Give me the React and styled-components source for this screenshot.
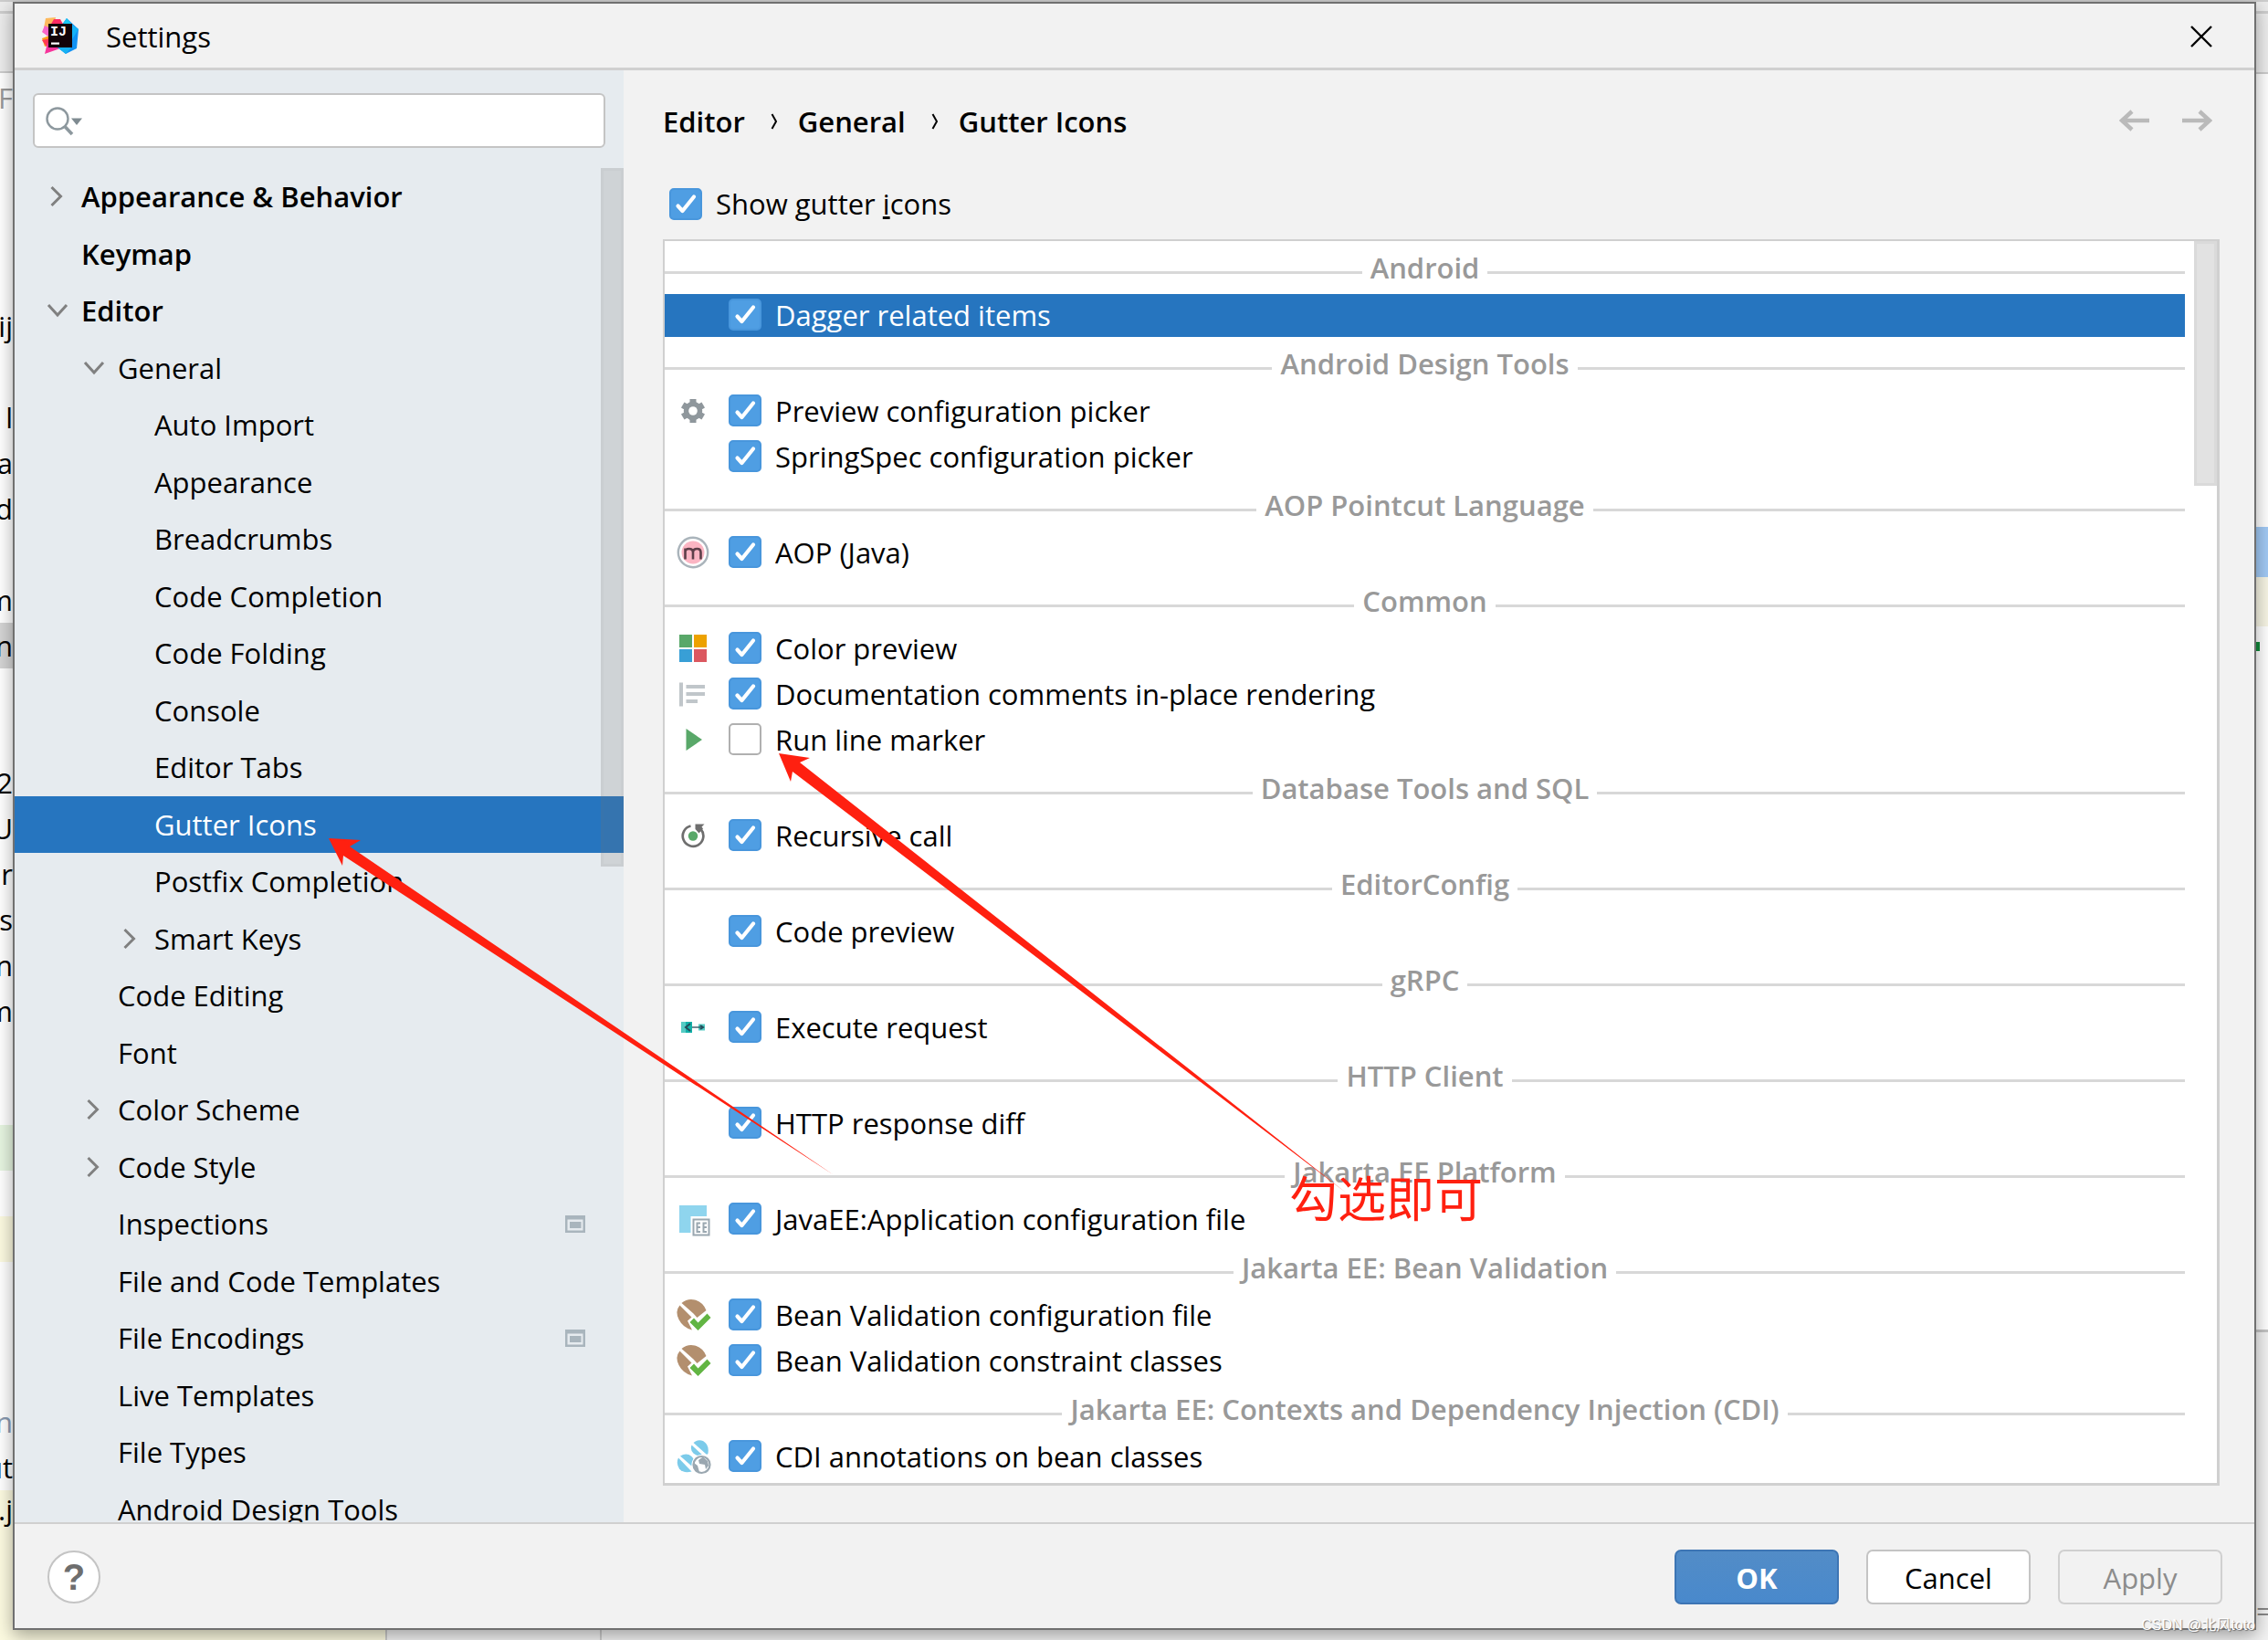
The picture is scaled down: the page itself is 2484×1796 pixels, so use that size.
import React from "react";
import styled, { createGlobalStyle } from "styled-components";

const checkMark = `url("data:image/svg+xml,%3Csvg xmlns='http://www.w3.org/2000/svg' viewBox='0 0 36 35'%3E%3Cpath d='M9.5 19.5L14.5 25L27 9.5' fill='none' stroke='white' stroke-width='4.2' stroke-linecap='round' stroke-linejoin='round'/%3E%3C/svg%3E")`;

const tree = [
    { label: "Appearance & Behavior", level: 0, arrow: "right", bold: true },
    { label: "Keymap", level: 0, bold: true },
    { label: "Editor", level: 0, arrow: "down", bold: true },
    { label: "General", level: 1, arrow: "down" },
    { label: "Auto Import", level: 2 },
    { label: "Appearance", level: 2 },
    { label: "Breadcrumbs", level: 2 },
    { label: "Code Completion", level: 2 },
    { label: "Code Folding", level: 2 },
    { label: "Console", level: 2 },
    { label: "Editor Tabs", level: 2 },
    { label: "Gutter Icons", level: 2, selected: true },
    { label: "Postfix Completion", level: 2 },
    { label: "Smart Keys", level: 2, arrow: "right" },
    { label: "Code Editing", level: 1 },
    { label: "Font", level: 1 },
    { label: "Color Scheme", level: 1, arrow: "right" },
    { label: "Code Style", level: 1, arrow: "right" },
    { label: "Inspections", level: 1, badge: true },
    { label: "File and Code Templates", level: 1 },
    { label: "File Encodings", level: 1, badge: true },
    { label: "Live Templates", level: 1 },
    { label: "File Types", level: 1 },
    { label: "Android Design Tools", level: 1 },
];

const groups = [
    { title: "Android", items: [{ label: "Dagger related items", checked: true, selected: true }] },
    {
        title: "Android Design Tools",
        items: [
            { label: "Preview configuration picker", checked: true, icon: "gear" },
            { label: "SpringSpec configuration picker", checked: true },
        ],
    },
    { title: "AOP Pointcut Language", items: [{ label: "AOP (Java)", checked: true, icon: "aop" }] },
    {
        title: "Common",
        items: [
            { label: "Color preview", checked: true, icon: "colors" },
            { label: "Documentation comments in-place rendering", checked: true, icon: "doc" },
            { label: "Run line marker", checked: false, icon: "run" },
        ],
    },
    { title: "Database Tools and SQL", items: [{ label: "Recursive call", checked: true, icon: "recursive" }] },
    { title: "EditorConfig", items: [{ label: "Code preview", checked: true }] },
    { title: "gRPC", items: [{ label: "Execute request", checked: true, icon: "grpc" }] },
    { title: "HTTP Client", items: [{ label: "HTTP response diff", checked: true }] },
    {
        title: "Jakarta EE Platform",
        items: [{ label: "JavaEE:Application configuration file", checked: true, icon: "javaee" }],
    },
    {
        title: "Jakarta EE: Bean Validation",
        items: [
            { label: "Bean Validation configuration file", checked: true, icon: "bean" },
            { label: "Bean Validation constraint classes", checked: true, icon: "bean" },
        ],
    },
    {
        title: "Jakarta EE: Contexts and Dependency Injection (CDI)",
        items: [{ label: "CDI annotations on bean classes", checked: true, icon: "cdi" }],
    },
];

// what is left of the editor on the left of the dialog, line by line
const editorLines = Array.from({ length: 31 }, () => ({}));
editorLines[0] = { text: "F", color: "#999" };
editorLines[5] = { text: "ij" };
editorLines[7] = { text: "l" };
editorLines[8] = { text: "a" };
editorLines[9] = { text: "d" };
editorLines[11] = { text: "m" };
editorLines[12] = { text: "n", bg: "#d4d4d4" };
editorLines[15] = { text: "2" };
editorLines[16] = { text: "U" };
editorLines[17] = { text: "r" };
editorLines[18] = { text: "s" };
editorLines[19] = { text: "n" };
editorLines[20] = { text: "m" };
editorLines[23] = { bg: "#e6f5e0" };
editorLines[25] = { bg: "#fcfae0" };
editorLines[29] = { text: "n", color: "#8a9ab0" };
editorLines[30] = { text: "ut" };

function ItemIcon({ name }) {
    switch (name) {
        case "gear":
            return (
                <Icon viewBox="0 0 40 40">
                    <g fill="#8f979c">
                        {[0, 60, 120].map((a) => (
                            <rect key={a} x="16.5" y="7" width="7" height="26" transform={`rotate(${a} 20 20)`} />
                        ))}
                    </g>
                    <circle cx="20" cy="20" r="7.5" fill="none" stroke="#8f979c" strokeWidth="5.5" />
                    <circle cx="20" cy="20" r="4.8" fill="#fff" />
                </Icon>
            );
        case "aop":
            return (
                <Icon viewBox="0 0 40 40">
                    <circle cx="20" cy="20" r="16.2" fill="#fff" stroke="#aab4bb" strokeWidth="2.4" />
                    <circle cx="20" cy="20" r="12.5" fill="#fbb5c3" />
                    <path d="M11.5 27.5V15.5M11.5 19.5Q11.5 16 15.5 16Q20 16 20 20V27.5M20 20Q20 16 24.5 16Q28.500 16 28.500 20V27.5" fill="none" stroke="#5d3f49" strokeWidth="2.6" />
                </Icon>
            );
        case "colors":
            return (
                <Icon viewBox="0 0 40 40">
                    <rect x="5" y="5" width="14" height="14" fill="#59a869" />
                    <rect x="21" y="5" width="14" height="14" fill="#eda200" />
                    <rect x="5" y="21" width="14" height="14" fill="#389fd6" />
                    <rect x="21" y="21" width="14" height="14" fill="#db5860" />
                </Icon>
            );
        case "doc":
            return (
                <Icon viewBox="0 0 40 40">
                    <path d="M5 7.5h4v26H5zM12.500 10H33v4H12.500zM12.500 18H33v4H12.500zM12.500 26H25v4H12.500z" fill="#c0c6ca" />
                </Icon>
            );
        case "run":
            return (
                <Icon viewBox="0 0 40 40">
                    <path d="M12.500 8L30 20L12.500 32z" fill="#59a869" />
                </Icon>
            );
        case "recursive":
            return (
                <Icon viewBox="0 0 40 40">
                    <path d="M17.500 9.500A11.300 11.300 0 1 0 28.500 13" fill="none" stroke="#6e6e6e" strokeWidth="2.700" />
                    <path d="M22.500 7.500H32.500L29.500 10.500L31 12.500L26.500 17.500L22.500 13z" fill="#6e6e6e" />
                    <circle cx="20" cy="20.500" r="5.200" fill="#59a869" />
                </Icon>
            );
        case "grpc":
            return (
                <Icon viewBox="0 0 40 40">
                    <rect x="7" y="14" width="12" height="12" fill="#56cbc4" />
                    <rect x="12" y="14" width="7" height="12" fill="#12b0a8" />
                    <rect x="26" y="16.500" width="7" height="7" fill="#56cbc4" />
                    <path d="M19 20H31" stroke="#244c5a" strokeWidth="1.300" />
                    <path d="M17 16L12 20L17 24M28 18L31 20L28 22" fill="none" stroke="#244c5a" strokeWidth="2" />
                </Icon>
            );
        case "javaee":
            return (
                <Icon viewBox="0 0 40 40">
                    <path d="M5 5H35V17H17.500V35H5z" fill="#8fd5ee" />
                    <rect x="20.500" y="20.500" width="17" height="17" fill="#fff" stroke="#9aa7b0" strokeWidth="2" />
                    <path d="M28 24.500H24.500V34H28M24.500 29H28M35 24.500H31.500V34H35M31.500 29H35" fill="none" stroke="#9aa7b0" strokeWidth="2" />
                </Icon>
            );
        case "bean":
            return (
                <Icon viewBox="0 0 40 40">
                    <path d="M7.500 7Q14 1.500 22 3.500Q31 6 34.500 15L24.500 23L20.500 18.500z" fill="#b38f6e" />
                    <path d="M5.500 9.500L18.500 22.500L14 26.500L19 36.500Q9 34 4.500 25Q0 16 5.500 9.500z" fill="#b38f6e" />
                    <path d="M16.500 28L21 23.500L25.500 28.500L35.500 18.500L39.500 23L25.500 37z" fill="#62b543" />
                </Icon>
            );
        case "cdi":
            return (
                <Icon viewBox="0 0 40 40">
                    <path d="M20.500 5Q25 1 31 3Q38 7 36.500 16.500Q36.500 18 34.500 17.500z" fill="#7ccbea" />
                    <path d="M18.500 7.500L31 19Q25 20.500 20.500 16.500Q16.500 12.500 18.500 7.500z" fill="#7ccbea" />
                    <path d="M6 19.500Q13 15.500 18.500 20L20.500 22.500L18.500 30.500z" fill="#7ccbea" />
                    <path d="M4 21.500L18.500 36.500Q10 39 5 33.500Q1 27 4 21.500z" fill="#7ccbea" />
                    <circle cx="29.500" cy="29" r="11" fill="#fff" />
                    <circle cx="29.500" cy="29" r="9" fill="#fff" stroke="#9aa7b0" strokeWidth="2.200" />
                    <path d="M21 27L25 30L27 37Q21 35 21 27zM26 24L31 20.500L36 25L37 30L34 34L33 29L27 28z" fill="#9aa7b0" />
                </Icon>
            );
        default:
            return <Icon viewBox="0 0 40 40" />;
    }
}

function Arrow({ dir }) {
    return (
        <ArrowIcon viewBox="0 0 40 40">
            {dir === "right" && <path d="M13.500 10L23.500 20L13.500 30" />}
            {dir === "down" && <path d="M10 14L20 25L30 14" />}
        </ArrowIcon>
    );
}

function Logo() {
    return (
        <LogoIcon viewBox="0 0 40 40">
            <path d="M4 1L15 0L11 16L1 17z" fill="#fdb95c" />
            <path d="M3 9L9 12L8 22L0 16z" fill="#f765c8" />
            <path d="M9 9L13 2L20 2L24 9L18 14z" fill="#ff2b62" />
            <path d="M0 23L8 20L9 30L3 32z" fill="#ff9a1a" />
            <path d="M0 25L9 23L8 34L5 32z" fill="#ff3a55" />
            <path d="M6 28L3 40L20 34L16 30z" fill="#f7349b" />
            <path d="M21 9L27 1L40 13L38 34L26 40L17 33L28 30z" fill="#1192f5" />
            <path d="M22 9L27 1L33 8z" fill="#19c7f2" />
            <path d="M40 13L33 8L33 24z" fill="#16b3f8" />
            <path d="M17 33L26 40L33 32z" fill="#17b2f2" />
            <rect x="7" y="7" width="26" height="26" fill="#120308" />
            <LogoText x="9" y="20">IJ</LogoText>
            <rect x="10" y="27.500" width="9" height="2.200" fill="#fff" />
        </LogoIcon>
    );
}

function GutterItem({ item }) {
    return (
        <ItemRow $selected={item.selected}>
            <ItemIcon name={item.icon} />
            <Check type="checkbox" defaultChecked={item.checked} />
            <ItemText>{item.label}</ItemText>
        </ItemRow>
    );
}

function App() {
    return (
        <Page>
            <GlobalStyle />
            <TopEdge />
            <Middle>
                <LeftStrip aria-hidden="true">
                    <StripBar $height={78} />
                    {editorLines.map((line, i) => (
                        <EditorLine key={i} $bg={line.bg} $color={line.color}>{line.text}</EditorLine>
                    ))}
                    <EditorTail>5.j</EditorTail>
                </LeftStrip>
                <Dialog>
                    <TitleBar>
                        <Logo />
                        <Title>Settings</Title>
                        <CloseButton aria-label="Close">
                            <svg width="24" height="24" viewBox="0 0 24 24">
                                <path d="M1 1L23 23M23 1L1 23" stroke="#000" strokeWidth="2.400" />
                            </svg>
                        </CloseButton>
                    </TitleBar>
                    <Body>
                        <Sidebar>
                            <SearchBox>
                                <svg width="44" height="34" viewBox="0 0 44 34">
                                    <circle cx="15" cy="15" r="11.500" fill="none" stroke="#8d989e" strokeWidth="2.400" />
                                    <path d="M23 23.500L31 32" stroke="#8d989e" strokeWidth="3.600" />
                                    <path d="M30 14.500H42L36 22z" fill="#7f8b91" />
                                </svg>
                                <SearchInput type="text" aria-label="Search settings" />
                            </SearchBox>
                            <Tree>
                                {tree.map((node) => (
                                    <TreeRow key={node.label + node.level} $level={node.level} $bold={node.bold} $selected={node.selected}>
                                        <Arrow dir={node.arrow} />
                                        <TreeLabel>{node.label}</TreeLabel>
                                        {node.badge && (
                                            <svg width="22" height="19" viewBox="0 0 22 19">
                                                <path d="M0 0H22V19H0zM2.500 4.500V16.500H19.500V4.500z" fill="#a9b5bd" fillRule="evenodd" />
                                                <rect x="5" y="7" width="12.500" height="7" fill="#a9b5bd" />
                                            </svg>
                                        )}
                                    </TreeRow>
                                ))}
                                <TreeThumb />
                            </Tree>
                        </Sidebar>
                        <Main>
                            <Crumbs>
                                <Crumb href="#editor">Editor</Crumb>
                                <CrumbSep viewBox="0 0 8 18"><path d="M1.500 1L6 9L1.500 17" /></CrumbSep>
                                <Crumb href="#general">General</Crumb>
                                <CrumbSep viewBox="0 0 8 18"><path d="M1.500 1L6 9L1.500 17" /></CrumbSep>
                                <Crumb href="#gutter-icons">Gutter Icons</Crumb>
                                <History>
                                    <HistoryButton aria-label="Back">
                                        <svg width="34" height="24" viewBox="0 0 34 24"><path d="M33 12H3M14 2L3 12L14 22" /></svg>
                                    </HistoryButton>
                                    <HistoryButton aria-label="Forward">
                                        <svg width="34" height="24" viewBox="0 0 34 24"><path d="M1 12H31M20 2L31 12L20 22" /></svg>
                                    </HistoryButton>
                                </History>
                            </Crumbs>
                            <ShowAll>
                                <Check type="checkbox" defaultChecked />
                                <ItemText>Show gutter <u>i</u>cons</ItemText>
                            </ShowAll>
                            <ListBox>
                                <ListContent>
                                    {groups.map((group) => (
                                        <React.Fragment key={group.title}>
                                            <GroupHeader>{group.title}</GroupHeader>
                                            {group.items.map((item) => (
                                                <GutterItem key={item.label} item={item} />
                                            ))}
                                        </React.Fragment>
                                    ))}
                                </ListContent>
                                <ListThumb />
                            </ListBox>
                        </Main>
                    </Body>
                    <Footer>
                        <HelpButton aria-label="Help">?</HelpButton>
                        <Button $primary>OK</Button>
                        <Button>Cancel</Button>
                        <Button disabled>Apply</Button>
                    </Footer>
                </Dialog>
                <RightStrip aria-hidden="true">
                    <StripBar $height={79} />
                    <StripBlock $height={494} $bg="#fff" />
                    <StripBlock $height={55} $bg="#a1c9f5" />
                    <StripBlock $height={54} $bg="#f7f5e4" />
                    <StripBlock $height={17} $bg="#fff" />
                    <StripMark />
                    <StripBlock $height={743} $bg="#fff" />
                    <StripRest>=</StripRest>
                </RightStrip>
            </Middle>
            <BottomEdge>
                <EdgeYellow />
                <EdgePart />
            </BottomEdge>
            <Annotations viewBox="0 0 2484 1796" preserveAspectRatio="none" aria-hidden="true">
                <path d="M360 918L395 920L383 927L912 1286L376 937L375 948z" />
                <path d="M853 825L887 830L876 835L1474 1306L868 845L866 856z" />
            </Annotations>
            <Note>勾选即可</Note>
            <Watermark>CSDN @北风toto</Watermark>
        </Page>
    );
}

export default App;

const GlobalStyle = createGlobalStyle`
    * {
        box-sizing:border-box;
    }
    body {
        margin:0;
        font-family:"Open Sans", "Noto Sans", "Noto Sans CJK SC", sans-serif;
        font-size:31px;
        line-height:42px;
        color:#000;
    }
    button, input {
        font:inherit;
        color:inherit;
    }
`
const Page = styled.div`
    position:relative;
    height:100vh;
    display:flex;
    flex-direction:column;
    overflow:hidden;
    background:#fff;
`
const TopEdge = styled.div`
    height:2px;
    background:#cdcdcd;
`
const Middle = styled.div`
    flex:1;
    min-height:0;
    display:grid;
    grid-template-columns:14px minmax(0, 1fr) 13px;
`
const LeftStrip = styled.div`
    display:flex;
    flex-direction:column;
    overflow:hidden;
`
const RightStrip = styled(LeftStrip)``
const StripBar = styled.div`
    flex:none;
    height:${(p) => p.$height}px;
    background:linear-gradient(#ccc, #ccc) 0 10px / 100% 3px no-repeat #ececec;
    border-bottom:2px solid #ccc;
    margin-bottom:2px;
`
const StripBlock = styled.div`
    height:${(p) => p.$height}px;
    background:${(p) => p.$bg};
`
const StripMark = styled.div`
    width:4px;
    height:10px;
    background:#118a3a;
`
const StripRest = styled.div`
    flex:1;
    display:flex;
    align-items:flex-end;
    border-top:3px solid #c4c4c4;
    background:#f2f2f2;
    color:#888;
`
const EditorLine = styled.div`
    flex:none;
    display:flex;
    align-items:center;
    justify-content:flex-end;
    height:50px;
    background:${(p) => p.$bg || "#fff"};
    color:${(p) => p.$color || "#000"};
`
const EditorTail = styled(EditorLine)`
    flex:1;
    align-items:flex-start;
    background:#fcfae0;
`
const BottomEdge = styled.div`
    display:flex;
    height:11px;
    background:#f2f2f2;
`
const EdgeYellow = styled.div`
    width:424px;
    background:#fcfae0;
    border-right:2px solid #ccc;
`
const EdgePart = styled(EdgeYellow)`
    width:235px;
    background:#f2f2f2;
`
const Dialog = styled.div`
    z-index:1;
    min-height:0;
    display:flex;
    flex-direction:column;
    background:#f2f2f2;
    border:2px solid #707070;
    box-shadow:0 6px 18px rgba(0, 0, 0, 0.35);
`
const TitleBar = styled.header`
    flex:none;
    display:flex;
    align-items:center;
    height:73px;
    padding:0 46px 0 30px;
    border-bottom:3px solid #d0d0d0;
`
const LogoIcon = styled.svg`
    width:40px;
    height:40px;
`
const LogoText = styled.text`
    font:bold 15px "Liberation Mono", monospace;
    fill:#fff;
`
const Title = styled.div`
    flex:1;
    margin-left:30px;
    padding-top:2px;
`
const CloseButton = styled.button`
    display:flex;
    padding:2px 0 0;
    border:none;
    background:none;
`
const Body = styled.div`
    flex:1;
    min-height:0;
    display:grid;
    grid-template-columns:667px minmax(0, 1fr);
`
const Sidebar = styled.nav`
    min-height:0;
    display:flex;
    flex-direction:column;
    gap:22px;
    padding-top:25px;
    background:#e6ebef;
`
const SearchBox = styled.label`
    flex:none;
    display:flex;
    align-items:center;
    height:60px;
    margin:0 20px;
    padding-left:10px;
    background:#fff;
    border:2px solid #c4c4c4;
    border-radius:6px;
`
const SearchInput = styled.input`
    flex:1;
    border:none;
    outline:none;
    background:none;
`
const Tree = styled.div`
    position:relative;
    flex:1;
    min-height:0;
    overflow:hidden;
`
const TreeRow = styled.button`
    display:flex;
    align-items:center;
    gap:6px;
    width:100%;
    height:62px;
    padding:0 42px 1px ${(p) => 27 + p.$level * 40}px;
    border:none;
    text-align:left;
    font-weight:${(p) => (p.$bold ? 600 : 400)};
    background:${(p) => (p.$selected ? "#2675bf" : "transparent")};
    color:${(p) => (p.$selected ? "#fff" : "#000")};

&:nth-child(odd) {
    height:63px;
}
`
const ArrowIcon = styled.svg`
    flex:none;
    width:40px;
    height:40px;
    fill:none;
    stroke:#808080;
    stroke-width:3;
`
const TreeLabel = styled.span`
    flex:1;
    white-space:nowrap;
`
const TreeThumb = styled.div`
    position:absolute;
    top:0;
    right:0;
    width:25px;
    height:765px;
    background:rgba(115, 115, 115, 0.2);
    border:3px solid rgba(115, 115, 115, 0.05);
`
const Main = styled.main`
    min-height:0;
    display:flex;
    flex-direction:column;
    padding:32px 38px 40px 43px;
`
const Crumbs = styled.div`
    flex:none;
    display:flex;
    align-items:center;
    height:48px;
`
const Crumb = styled.a`
    font-weight:600;
    color:#000;
    text-decoration:none;
`
const CrumbSep = styled.svg`
    width:8px;
    height:18px;
    margin:0 22px 0 28px;
    fill:none;
    stroke:#000;
    stroke-width:2;
`
const History = styled.div`
    display:flex;
    gap:34px;
    margin-left:auto;
    padding:0 8px 2px 0;
`
const HistoryButton = styled.button`
    display:flex;
    padding:0;
    border:none;
    background:none;
    fill:none;
    stroke:#bababa;
    stroke-width:4.500;
`
const ShowAll = styled.label`
    flex:none;
    display:flex;
    align-items:center;
    height:48px;
    margin:42px 0 15px;
    padding-left:7px;
`
const Check = styled.input`
    appearance:none;
    flex:none;
    width:36px;
    height:35px;
    margin:0;
    background:#fff;
    border:2px solid #b0b0b0;
    border-radius:5px;

&:checked {
    background:${checkMark} center / 36px 35px no-repeat #4f9ee3;
    border-color:#4896dc;
}
`
const ItemText = styled.span`
    margin-left:15px;
    white-space:nowrap;
`
const ListBox = styled.div`
    flex:1;
    min-height:0;
    display:flex;
    gap:10px;
    overflow:hidden;
    background:#fff;
    border:2px solid #d0d0d0;
    border-width:2px 3px 3px 2px;
`
const ListContent = styled.div`
    flex:1;
    padding-top:3px;
`
const ListThumb = styled.div`
    flex:none;
    width:25px;
    height:268px;
    background:#e2e2e2;
    border:3px solid #dadada;
`
const GroupHeader = styled.h3`
    display:flex;
    align-items:center;
    gap:9px;
    height:55px;
    margin:0;
    padding-bottom:3px;
    font-size:31px;
    font-weight:600;
    white-space:nowrap;
    color:#999;

&:before, &:after {
    content:"";
    flex:1;
    height:3px;
    margin-top:11px;
    background:#d8d8d8;
}
`
const ItemRow = styled.label`
    display:flex;
    align-items:center;
    height:47px;
    margin-bottom:3px;
    padding:0 0 2px 11px;
    background:${(p) => (p.$selected ? "#2675bf" : "transparent")};
    color:${(p) => (p.$selected ? "#fff" : "#000")};
`
const Icon = styled.svg`
    flex:none;
    width:40px;
    height:40px;
    margin-right:19px;
`
const Footer = styled.footer`
    flex:none;
    display:flex;
    align-items:center;
    gap:30px;
    height:116px;
    padding:2px 35px 0 36px;
    border-top:2px solid #d0d0d0;
`
const HelpButton = styled.button`
    width:58px;
    height:58px;
    margin-right:auto;
    padding:0;
    border:2px solid #c4c4c4;
    border-radius:50%;
    background:#fff;
    font:bold 40px "Liberation Sans", sans-serif;
    color:#6e6e6e;
`
const Button = styled.button`
    width:180px;
    height:60px;
    padding:2px 0 0;
    border:2px solid ${(p) => (p.$primary ? "#3d75b4" : "#c4c4c4")};
    border-radius:7px;
    background:${(p) => (p.$primary ? "linear-gradient(#528cc7, #4989cc)" : "#fff")};
    color:${(p) => (p.$primary ? "#fff" : "#000")};
    font-weight:${(p) => (p.$primary ? "bold" : "normal")};

&:disabled {
    background:#f2f2f2;
    border-color:#d0d0d0;
    color:#8c8c8c;
}
`
const Annotations = styled.svg`
    position:absolute;
    z-index:2;
    inset:0;
    width:100%;
    height:100%;
    fill:#ff2010;
    pointer-events:none;
`
const Note = styled.div`
    position:absolute;
    z-index:2;
    left:1412px;
    top:1271px;
    font-family:"Noto Sans CJK SC", sans-serif;
    font-size:53px;
    line-height:78px;
    color:#ff2010;
`
const Watermark = styled.div`
    position:absolute;
    z-index:2;
    right:14px;
    bottom:6px;
    font-family:"Liberation Sans", "Noto Sans CJK SC", sans-serif;
    font-size:16px;
    line-height:20px;
    color:#fff;
    text-shadow:1px 1px 1px #777;
`
